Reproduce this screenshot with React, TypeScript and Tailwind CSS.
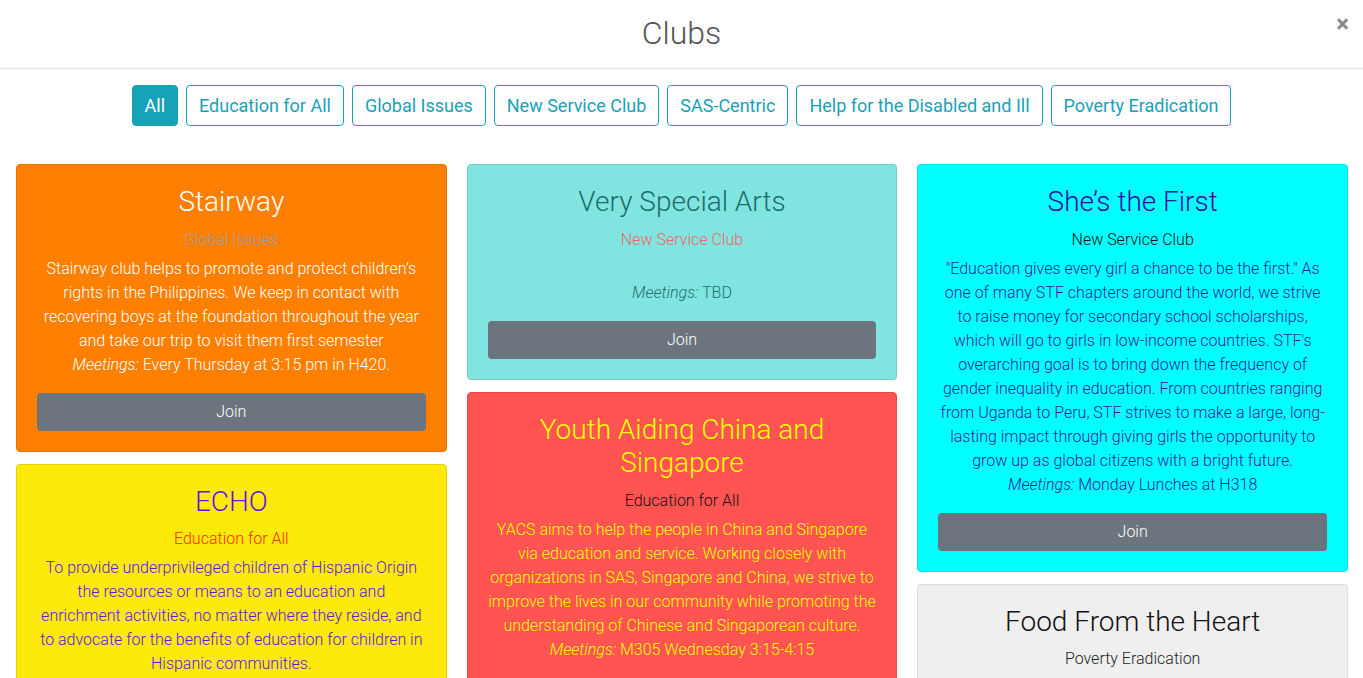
import React from 'react';

type Club = {
	name: string;
	category: string;
	description?: string;
	meetings: string;
	bg: string;
	titleColor: string;
	catColor: string;
	textColor: string;
	join?: boolean;
};

const filters = [
	'All',
	'Education for All',
	'Global Issues',
	'New Service Club',
	'SAS-Centric',
	'Help for the Disabled and Ill',
	'Poverty Eradication',
];

const columns: Club[][] = [
	[
		{
			name: 'Stairway',
			category: 'Global Issues',
			description:
				'Stairway club helps to promote and protect children’s rights in the Philippines. We keep in contact with recovering boys at the foundation throughout the year and take our trip to visit them first semester',
			meetings: 'Every Thursday at 3:15 pm in H420.',
			bg: 'bg-[#ff8000] border-[#e57300]',
			titleColor: 'text-white',
			catColor: 'text-[#9e9e9e]',
			textColor: 'text-white',
			join: true,
		},
		{
			name: 'ECHO',
			category: 'Education for All',
			description:
				'To provide underprivileged children of Hispanic Origin the resources or means to an education and enrichment activities, no matter where they reside, and to advocate for the benefits of education for children in Hispanic communities.',
			meetings: 'Fridays at lunch in H301',
			bg: 'bg-[#fdea0a] border-[#e3d209]',
			titleColor: 'text-[#5b14e0]',
			catColor: 'text-[#ff2a00]',
			textColor: 'text-[#5a1ad2]',
			join: true,
		},
	],
	[
		{
			name: 'Very Special Arts',
			category: 'New Service Club',
			description: '',
			meetings: 'TBD',
			bg: 'bg-[#80e5e0] border-[#6fcfca]',
			titleColor: 'text-[#1c6d6b]',
			catColor: 'text-[#f06464]',
			textColor: 'text-[#246e6c]',
			join: true,
		},
		{
			name: 'Youth Aiding China and Singapore',
			category: 'Education for All',
			description:
				'YACS aims to help the people in China and Singapore via education and service. Working closely with organizations in SAS, Singapore and China, we strive to improve the lives in our community while promoting the understanding of Chinese and Singaporean culture.',
			meetings: 'M305 Wednesday 3:15-4:15',
			bg: 'bg-[#ff5452] border-[#e64b49]',
			titleColor: 'text-[#ffff00]',
			catColor: 'text-[#111111]',
			textColor: 'text-[#ffff00]',
			join: true,
		},
	],
	[
		{
			name: 'She’s the First',
			category: 'New Service Club',
			description:
				'"Education gives every girl a chance to be the first." As one of many STF chapters around the world, we strive to raise money for secondary school scholarships, which will go to girls in low-income countries. STF\'s overarching goal is to bring down the frequency of gender inequality in education. From countries ranging from Uganda to Peru, STF strives to make a large, long-lasting impact through giving girls the opportunity to grow up as global citizens with a bright future.',
			meetings: 'Monday Lunches at H318',
			bg: 'bg-[#00ffff] border-[#00e0e0]',
			titleColor: 'text-[#2b0c9e]',
			catColor: 'text-[#111111]',
			textColor: 'text-[#2d1ca0]',
			join: true,
		},
		{
			name: 'Food From the Heart',
			category: 'Poverty Eradication',
			description:
				'Food From the Heart is a charity that distributes food to the needy in Singapore. We help pack and deliver bread and goodie bags to families each month.',
			meetings: 'Tuesdays at lunch',
			bg: 'bg-[#efefef] border-[#dcdcdc]',
			titleColor: 'text-[#111111]',
			catColor: 'text-[#222222]',
			textColor: 'text-[#222222]',
			join: true,
		},
	],
];

const ClubCard: React.FC<{ club: Club }> = ({ club }) => (
	<div className={`rounded border px-5 pt-5 pb-5 text-center ${club.bg}`}>
		<h3 className={`text-[28px] leading-[33.6px] font-light mb-[9px] ${club.titleColor}`}>{club.name}</h3>
		<div className={`text-base leading-6 font-light ${club.catColor}`}>{club.category}</div>
		<div className={`mt-[5px] text-base leading-6 font-light ${club.textColor}`}>
			<p className="min-h-6">{club.description}</p>
			<p>
				<em>Meetings:</em> {club.meetings}
			</p>
		</div>
		{club.join && (
			<button className="mt-4 w-full h-[38px] rounded bg-[#6c757d] text-white text-base font-light">
				Join
			</button>
		)}
	</div>
);

export default function App() {
	return (
		<div className="h-screen bg-white font-['Roboto',sans-serif] overflow-hidden">
			{/* Header */}
			<div className="relative h-[69px] border-b border-[#dee2e6] flex items-center justify-center pb-[2px]">
				<h1 className="text-[32px] font-light text-[#555555]">Clubs</h1>
				<button className="absolute right-[14px] top-[12px] text-[24px] font-bold text-[#888888] leading-none">×</button>
			</div>

			{/* Filters */}
			<div className="flex justify-center gap-2 pt-4">
				{filters.map((f, i) => (
					<button
						key={f}
						className={`h-[41px] px-3 rounded border border-[#17a2b8] text-[18px] ${
							i === 0 ? 'bg-[#17a2b8] text-white' : 'bg-white text-[#17a2b8]'
						}`}
					>
						{f}
					</button>
				))}
			</div>

			{/* Cards */}
			<div className="grid grid-cols-3 gap-x-5 pl-4 pr-[15px] mt-[38px] items-start">
				{columns.map((col, i) => (
					<div key={i} className="flex flex-col gap-3">
						{col.map((c) => (
							<ClubCard key={c.name} club={c} />
						))}
					</div>
				))}
			</div>
		</div>
	);
}
